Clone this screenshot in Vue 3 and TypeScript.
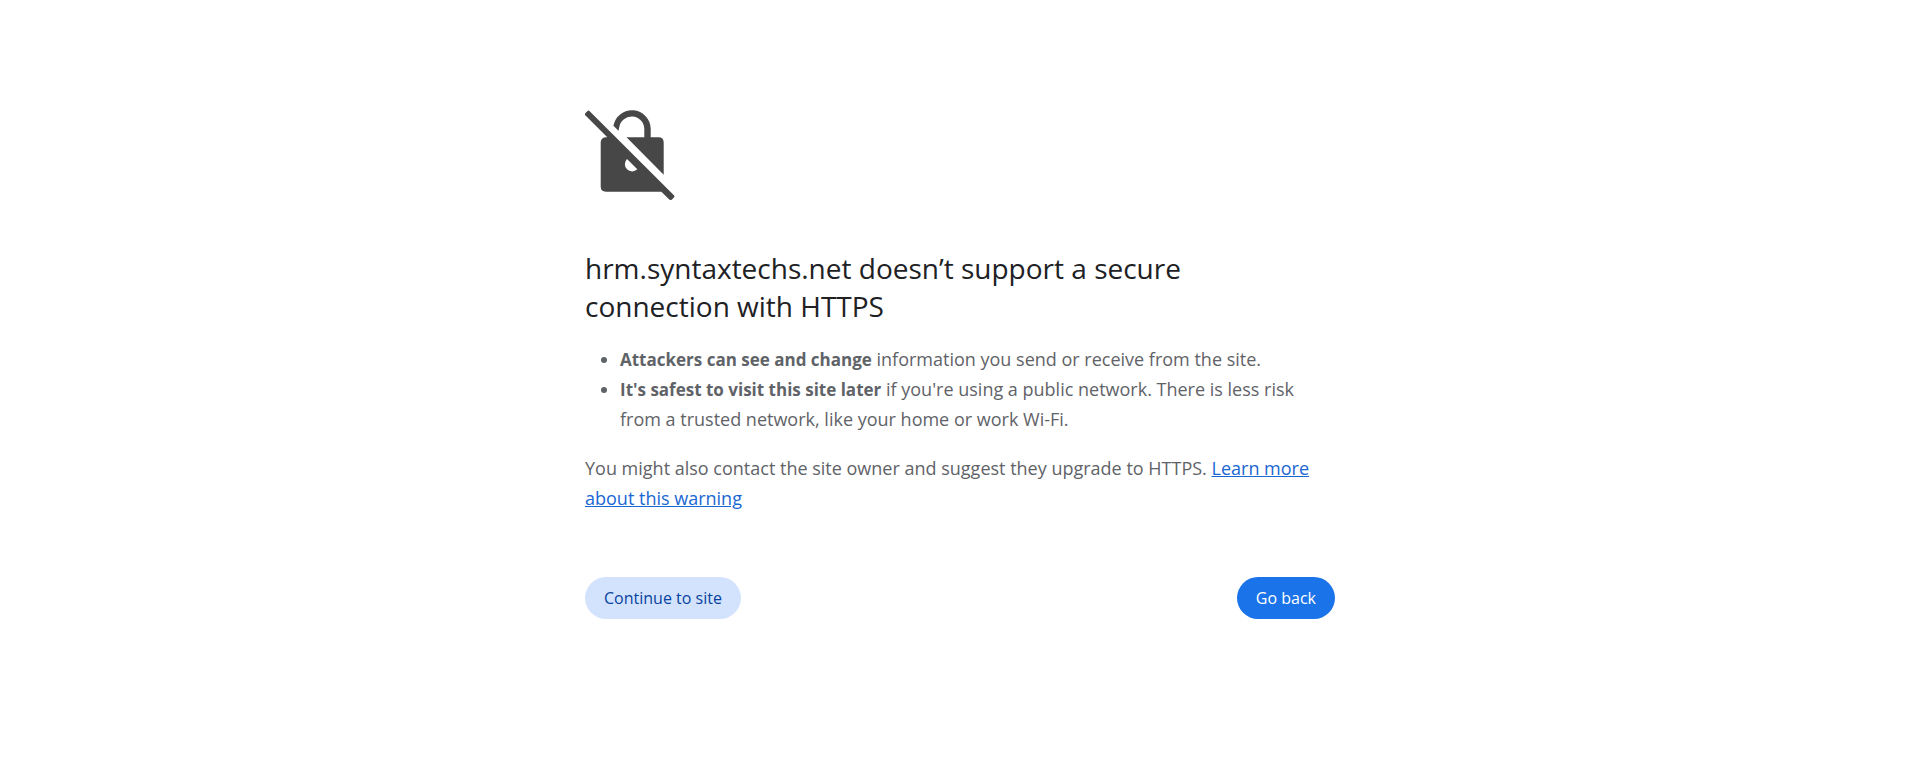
<script setup lang="ts">
const host: string = 'hrm.syntaxtechs.net'

interface Risk {
  lead: string
  detail: string
}

const risks: Risk[] = [
  { lead: 'Attackers can see and change', detail: 'information you send or receive from the site.' },
  {
    lead: "It's safest to visit this site later",
    detail: "if you're using a public network. There is less risk from a trusted network, like your home or work Wi-Fi.",
  },
]
</script>

<template>
  <main class="interstitial">
    <svg class="icon" viewBox="0 0 90 90" aria-hidden="true">
      <path d="M28.4 15.7A18.8 18.8 0 0 1 65.7 18.7V27.3H73.5Q78.7 27.3 78.7 32.5V64.7L41.500 27.300H59.300V18.700A12.600 12.600 0 0 0 34.200 17.500L33.500 20.800Z" />
      <path
        fill-rule="evenodd"
        d="M.5 5.500Q-.7 4.200 .5 2.900L2.300 1.200Q3.500 0 4.700 1.200L88.900 85.300Q90 86.400 88.900 87.600L87 89.500Q85.600 90.700 84 89.300L76.400 81.700H21Q15.700 81.700 15.700 76.500V32.500Q15.700 28 20.500 27.300L22.300 27.300ZM42 49A6.600 6.600 0 0 0 52.300 59.300Z"
      />
    </svg>
    <h1>{{ host }} doesn’t support a secure connection with HTTPS</h1>
    <ul>
      <li v-for="risk in risks" :key="risk.lead">
        <strong>{{ risk.lead }}</strong> {{ risk.detail }}
      </li>
    </ul>
    <p>
      You might also contact the site owner and suggest they upgrade to HTTPS.
      <a href="#learn-more">Learn more about this warning</a>
    </p>
    <div class="actions">
      <button type="button" class="secondary">Continue to site</button>
      <button type="button" class="primary">Go back</button>
    </div>
  </main>
</template>

<style>
body {
  margin: 0;
  background: #fff;
}
</style>

<style scoped>
.interstitial {
  box-sizing: border-box;
  max-width: 750px;
  margin: 0 auto;
  padding-top: 110px;
  color: #5f6368;
  font-family: "Open Sans", "Noto Sans", sans-serif;
  font-size: 18px;
  line-height: 30px;
}

.icon {
  display: block;
  width: 90px;
  height: 90px;
  margin-bottom: 49px;
  fill: #474747;
}

h1 {
  max-width: 640px;
  margin: 0 0 19px;
  color: #202124;
  font-size: 28px;
  font-weight: 400;
  line-height: 38px;
}

ul {
  margin: 0;
  padding-left: 35px;
}

strong {
  font-size: 17px;
  line-height: 1;
}

p {
  margin: 19px 0 0;
}

a {
  color: #1967d2;
  text-decoration: underline;
}

.actions {
  display: flex;
  justify-content: space-between;
  margin-top: 64px;
}

button {
  padding: 10px 19px;
  border: 0;
  border-radius: 21px;
  font: inherit;
  font-size: 16px;
  line-height: 22px;
  cursor: pointer;
}

.secondary {
  background: #d3e3fd;
  color: #0842a0;
}

.primary {
  background: #1a73e8;
  color: #fff;
}
</style>
